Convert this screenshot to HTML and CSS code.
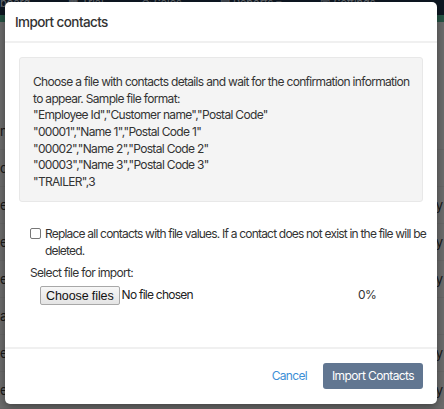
FILE: index.html
```html
<!DOCTYPE html>
<html lang="en">
<head>
<meta charset="utf-8">
<title>Import contacts</title>
<link rel="stylesheet" href="styles.css">
</head>
<body>
<div class="page">
  <div class="topnav">
    <span>board</span><span>▦ Trial</span><span>⟳ Sales</span><span>▤ Reports ▾</span><span>▣ Settings</span>
  </div>
  <div class="greenbar"></div>
  <div class="rows">
    <div class="row"><span>n</span><span></span></div>
    <div class="row"><span>c</span><span></span></div>
    <div class="row"><span>e</span><span>y</span></div>
    <div class="row"><span>e</span><span>y</span></div>
    <div class="row"><span>e</span><span>y</span></div>
    <div class="row"><span>a</span><span></span></div>
    <div class="row"><span>e</span><span>y</span></div>
    <div class="row"><span>e</span><span>y</span></div>
  </div>
</div>
<div class="backdrop"></div>
<div class="modal">
  <div class="modal-header">
    <h4 class="modal-title">Import contacts</h4>
  </div>
  <div class="modal-body">
    <div class="info">
      Choose a file with contacts details and wait for the confirmation information to appear. Sample file format:<br>
      "Employee Id","Customer name","Postal Code"<br>
      "00001","Name 1","Postal Code 1"<br>
      "00002","Name 2","Postal Code 2"<br>
      "00003","Name 3","Postal Code 3"<br>
      "TRAILER",3
    </div>
    <div class="form">
      <label class="check">
        <span class="box"></span>
        <span class="check-text">Replace all contacts with file values. If a contact does not exist in the file will be deleted.</span>
      </label>
      <div class="select-label">Select file for import:</div>
      <div class="file-row">
        <div class="file">
          <span class="file-btn">Choose files</span>
          <span class="file-name">No file chosen</span>
        </div>
        <span class="pct">0%</span>
      </div>
    </div>
  </div>
  <div class="modal-footer">
    <a class="cancel">Cancel</a>
    <button class="primary">Import Contacts</button>
  </div>
</div>
</body>
</html>
```

FILE: styles.css
```css
* { box-sizing: border-box; }
html, body { margin: 0; padding: 0; }
body {
  width: 444px;
  height: 409px;
  overflow: hidden;
  position: relative;
  font-family: Inter, "Noto Sans", sans-serif;
  background: #d9d9d9;
}
.page { height: 409px; display: flex; flex-direction: column; }
.topnav {
  height: 18px;
  background: #1c2f45;
  display: flex;
  gap: 38px;
  align-items: flex-start;
  font-size: 11px;
  color: #c9d2dc;
  line-height: 6px;
  overflow: hidden;
  white-space: nowrap;
}
.greenbar { height: 9px; background: #4fa88a; }
.rows { padding-top: 91px; }
.row {
  height: 37px;
  border-bottom: 1px solid #cfcfcf;
  display: flex;
  justify-content: space-between;
  align-items: center;
  font-size: 13px;
  color: #333;
  padding: 0 1px 0 0;
}
.backdrop {
  position: absolute;
  inset: 0;
  background: rgba(0, 0, 0, 0.5);
}
.modal {
  position: absolute;
  left: 5px;
  top: 2px;
  width: 432px;
  height: 402px;
  background: #fff;
  border-radius: 5px;
  box-shadow: 0 3px 9px rgba(0, 0, 0, 0.4);
  display: flex;
  flex-direction: column;
  color: #333;
  letter-spacing: -0.68px;
}
.modal-header {
  height: 41px;
  border-bottom: 2px solid #f0f0f0;
  padding: 1px 10px 0 10px;
  display: flex;
  align-items: center;
}
.modal-title {
  margin: 0;
  font-size: 13.5px;
  font-weight: 500;
  color: #333;
  letter-spacing: -0.6px;
}
.modal-body {
  flex: 1;
  padding: 14px 14px 0 14px;
}
.info {
  background: #f4f4f4;
  border: 1px solid #e8e8e8;
  border-radius: 3px;
  padding: 16px 4px 13px 13px;
  font-size: 12px;
  line-height: 16.67px;
  color: #333;
  height: 145px;
}
.form {
  padding: 24px 0 0 11px;
  margin-right: -8px;
  font-size: 12px;
  line-height: 16.5px;
}
.check { display: flex; gap: 4px; align-items: flex-start; }
.check-text { letter-spacing: -0.8px; }
.box {
  flex: none;
  width: 11px;
  height: 11px;
  border: 1px solid #777;
  border-radius: 2px;
  margin-top: 2px;
  background: #fff;
}
.select-label { margin-top: 6px; }
.file-row {
  display: flex;
  align-items: center;
  margin-top: 4px;
  padding-left: 10px;
}
.file { display: flex; align-items: center; gap: 2px; width: 318px; }
.file-btn {
  font-family: "Liberation Sans", Arial, sans-serif;
  letter-spacing: -0.1px;
  font-size: 12.5px;
  color: #111;
  border: 1px solid #a8a8a8;
  border-radius: 2px;
  background: linear-gradient(#f7f7f7, #e4e4e4);
  padding: 1px 5px;
  height: 19px;
  line-height: 16px;
}
.file-name {
  font-family: Inter, sans-serif;
  letter-spacing: -0.75px;
  font-size: 12px;
  color: #222;
}
.pct { font-size: 12px; }
.modal-footer {
  border-top: 2px solid #f0f0f0;
  height: 57px;
  display: flex;
  justify-content: flex-end;
  align-items: center;
  gap: 16px;
  padding: 0 14px 2px 0;
}
.cancel { color: #3d8fd6; font-size: 12px; }
.primary {
  font-family: Inter, sans-serif;
  letter-spacing: -0.6px;
  background: #617691;
  color: #fff;
  border: 0;
  border-radius: 3px;
  font-size: 12px;
  height: 26px;
  width: 100px;
  padding: 0;
}
```
